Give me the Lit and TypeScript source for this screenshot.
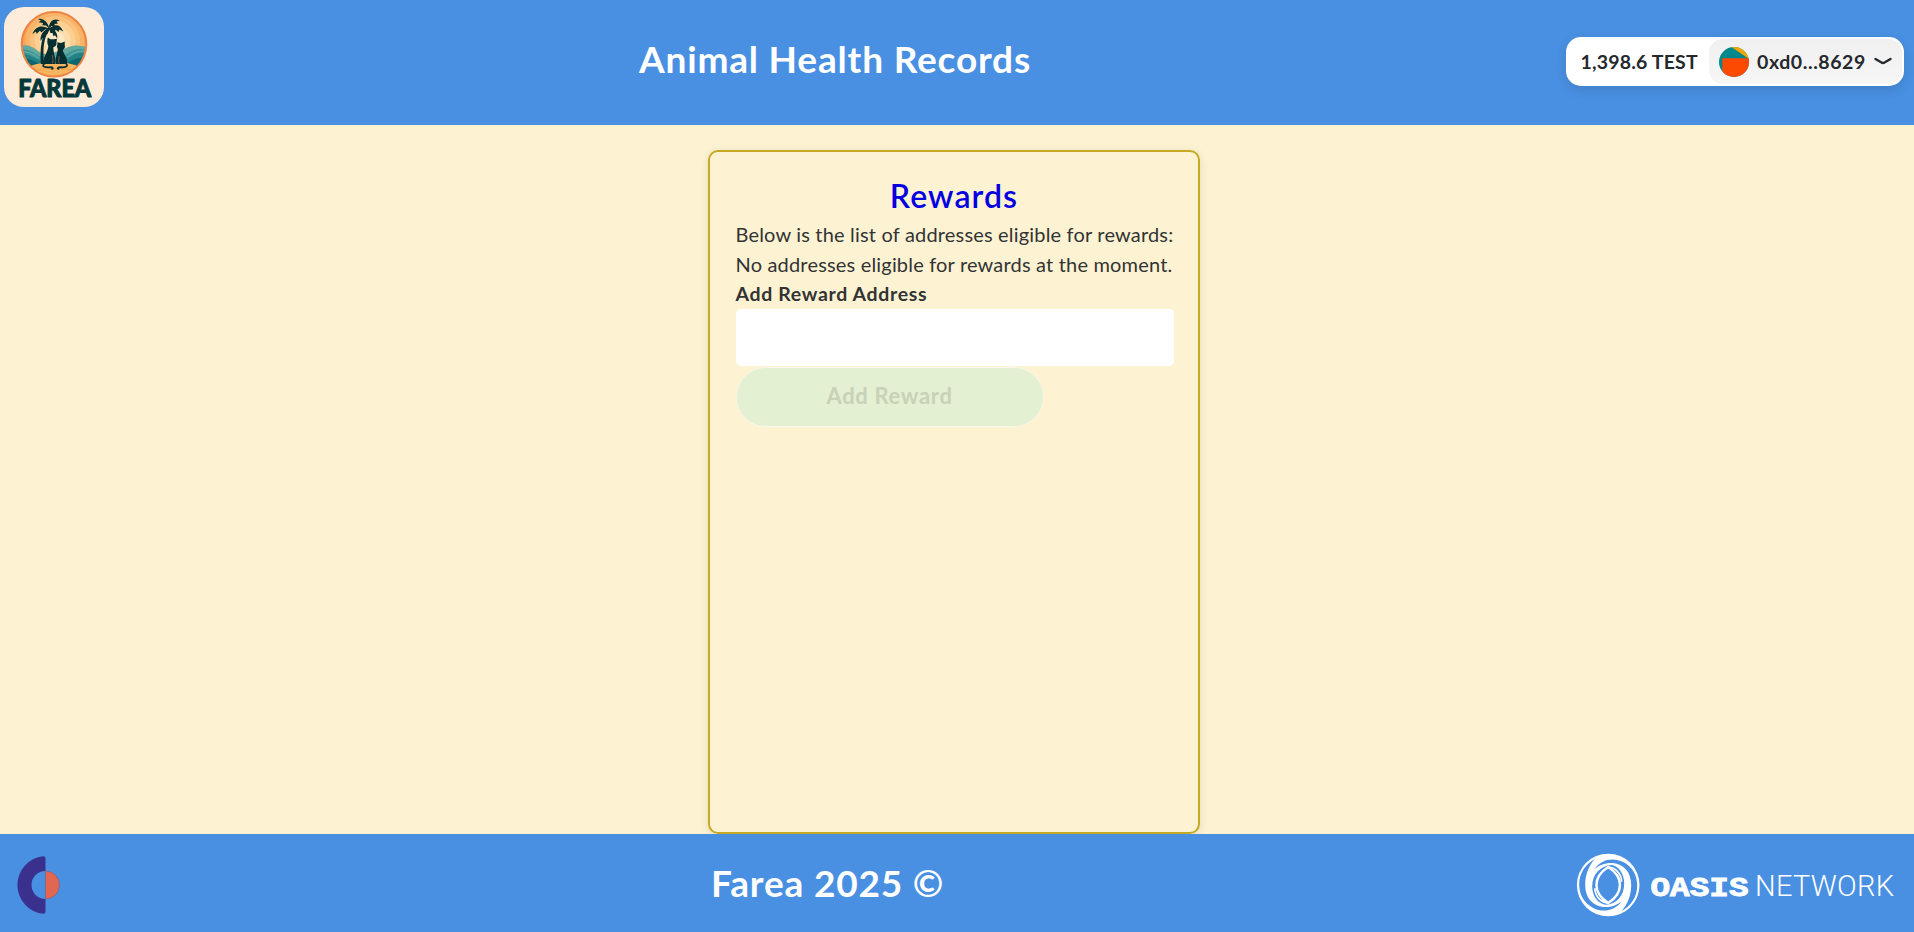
import { LitElement, html, css, svg } from 'lit';
import { customElement } from 'lit/decorators.js';

@customElement('farea-logo')
class FareaLogo extends LitElement {
  static styles = css`
    :host { display: block; width: 100px; height: 100px; }
    svg { display: block; }
    text { font-family: Lato, sans-serif; font-weight: 900; font-size: 24.5px; }
  `;
  render() {
    return html`<svg width="100" height="100" viewBox="0 0 100 100">
      <defs>
        <clipPath id="disc"><circle cx="50" cy="37.3" r="32.3" /></clipPath>
        <clipPath id="tile"><rect width="100" height="100" rx="20" /></clipPath>
      </defs>
      <g clip-path="url(#tile)">
        <rect width="100" height="100" fill="#fcecd9" />
        <g clip-path="url(#disc)">
          <rect x="15" y="3" width="70" height="70" fill="#f6a557" />
          <circle cx="51" cy="34" r="29.5" fill="#f9b469" />
          <circle cx="51" cy="34" r="25" fill="#fbc27c" />
          <circle cx="51" cy="34" r="20.5" fill="#fccf92" />
          <circle cx="51" cy="34" r="15.5" fill="#fddcab" />
          <circle cx="51" cy="34" r="10" fill="#fee7c3" />
          <path d="M15 39C24 37 29 40 34 44C40 48 45 48 51 45C59 44 64 38 73 38.5L85 40V72H15Z" fill="#62a99f" />
          <path d="M15 43C24 41 29 45 35 49C46 52 56 52 64 46C70 42 76 41 85 43V72H15Z" fill="#3d9797" />
          <path d="M15 48C24 45 29 51 38 54C50 55 59 54 66 50C72 46 77 45 85 47V72H15Z" fill="#238186" />
          <path d="M15 53C25 49 31 56 40 58H60C67 54 73 49 85 51V72H15Z" fill="#0c6770" />
          <path d="M15 46C23 43 28 47 35 51M64 50C71 44 77 43 85 45" fill="none" stroke="#87bcb0" stroke-width=".7" />
          <path d="M18 63C34 53 64 52 82 63V73H18Z" fill="#f7b45e" />
          <path d="M27 65C40 60 60 60 73 65" fill="none" stroke="#f09a45" stroke-width=".8" />
        </g>
        <circle cx="50" cy="37.3" r="32.3" fill="none" stroke="#ee8443" stroke-width="2" />
        <g fill="#072f32">
          <path d="M43.8 21C38.5 28 35.8 37 36.8 57H40C38.5 40 40 30 46 22Z" />
          <path d="M45.5 22C39 18 32 18 28.3 27L32 24.5L32.6 27L36 23.6L37.2 25.5L41 22.5Z" />
          <path d="M45.5 22C44 15 39 10.5 34 12L37 13.7L34.5 15.3L39 16L38.3 18.2L42 18.5Z" />
          <path d="M44.5 22C45 15 49 10 56 13.6L52.5 14.6L54 16.5L50.5 17L51 19L47.5 19Z" />
          <path d="M45 22C50 17 56 16.5 59.3 24.5L55.5 22.5L54.5 25L51.8 22.8L50.5 24.4Z" />
          <path d="M45 21C49 21 54 25 53.3 31.5L51 28.2L49.5 29.3L48.5 26L46.4 26Z" />
          <path d="M46 21C41 22 36 26 36.5 34L38.9 30.8L40 31.5L41.5 27.5L43.5 27Z" />
          <path d="M43.8 30.5L46.5 32.3H50L53 31.8L52.4 36C53 38.5 51 39.8 49.5 40C48.8 45 51.8 49 51.6 57H40C38.5 49 44 46 44.3 39C42.9 36.5 43.2 33 43.8 30.5Z" />
          <path d="M53.5 37C53 35.5 53.6 35 54.5 35.5L57 36L60.8 34.5L60.7 38C61.5 41 60 42.3 58.8 43C59.2 47 64.5 51 62.8 57H52C50.9 50 53.7 46 53.8 42C52.6 40.5 52.8 38.5 53.5 37Z" />
        </g>
        <path d="M40.5 56.5C36.5 60 42 60.5 46.5 60.2C49 60.2 49.5 61.5 48 62M62 56.5C65.5 60 60 60.5 56.5 60.2C53.5 60.2 53 61.5 54.5 62" fill="none" stroke="#072f32" stroke-width="1.7" stroke-linecap="round" />
        <path d="M48.7 48C48.2 51 50 53 48.5 56.5M55 49C55.7 52 53.7 53 55.2 56.5" fill="none" stroke="#c88f58" stroke-width=".5" />
        <text x="14.2" y="89.6" textLength="73" lengthAdjust="spacingAndGlyphs" fill="#04383a" stroke="#04383a" stroke-width="1" stroke-linejoin="round">FAREA</text>
      </g>
    </svg>`;
  }
}

@customElement('oasis-logo')
class OasisLogo extends LitElement {
  static styles = css`
    :host { display: flex; align-items: center; color: #fff; }
    svg { display: block; }
    .bold { font: 700 28.5px "Liberation Mono", monospace; }
    .light { font: 300 29px Roboto, sans-serif; }
  `;
  render() {
    const gap = svg`<path d="M-42-47C-20-78 15-84 45-69C74-54 87-28 87 2C87 35 69 62 40 78C60 56 69 28 69 0C69-38 48-62 14-66C-10-67-27-60-42-47Z" />`;
    return html`<svg width="318" height="64" viewBox="0 0 318 64">
      <g transform="translate(32.2 32) scale(.3333)">
        <circle r="94" fill="#fff" />
        <g fill="#4990e2">${gap}<g transform="rotate(180)">${gap}</g>
          <path d="M12-60C-25-58-48-32-48 4C-48 36-30 56-8 59C25 58 48 32 48-4C48-36 30-56 12-60Z" />
        </g>
        <path d="M0-54C-47-24-47 24 0 54C47 24 47-24 0-54Z" fill="none" stroke="#fff" stroke-width="7.5" />
        <path d="M0-54C22-53 40-33 40-10M0 54C-22 53-40 33-40 10" fill="none" stroke="#fff" stroke-width="5" />
      </g>
      <text class="bold" x="74.5" y="42.9" textLength="98" lengthAdjust="spacingAndGlyphs" fill="#fff" stroke="#fff" stroke-width=".9">OASIS</text>
      <text class="light" x="179" y="42.9" textLength="139" lengthAdjust="spacing" fill="#fff">NETWORK</text>
    </svg>`;
  }
}

@customElement('app-root')
class AppRoot extends LitElement {
  static styles = css`
    :host { display: flex; flex-direction: column; height: 932px; overflow: hidden; background: #fdf3d3; color: #333; font-family: Lato, sans-serif; }
    * { box-sizing: border-box; }
    h1, h2, p { margin: 0; }
    header { display: grid; grid-template-columns: 639px 1fr auto; height: 125px; flex: none; background: #4990e2; padding: 7px 10px 0 4px; align-items: start; }
    h1, .copy { font-size: 37px; line-height: 48px; font-weight: 700; letter-spacing: .82px; color: #fff; white-space: nowrap; }
    h1 { padding-top: 28px; margin-left: -4px; }
    .wallet { display: flex; align-items: center; width: 338px; height: 49px; margin-top: 30px; padding: 2px 2px 2px 0; border-radius: 15px; background: #fff; box-shadow: 0 4px 12px rgba(0,0,0,.12); color: #25292e; font-size: 19.5px; line-height: 24px; font-weight: 700; white-space: nowrap; }
    .balance { width: 144px; padding-left: 14.5px; letter-spacing: .18px; }
    .account { flex: 1; display: flex; align-items: center; height: 45px; padding: 0 10px; border-radius: 14px; background: linear-gradient(#f0f0f0, #f6f6f6); }
    .avatar { display: block; margin-right: 8px; }
    .address { width: 117px; letter-spacing: .57px; }
    main { flex: 1; padding: 25px 0 0 708px; min-height: 0; }
    .card { width: 492px; height: 684px; padding: 24px 25.5px; border: 2px solid #c5a922; border-radius: 10px; box-shadow: 0 2px 10px rgba(0,0,0,.1); }
    h2 { font-size: 32px; line-height: 40px; height: 43px; font-weight: 600; letter-spacing: 1.1px; color: #0400e2; text-align: center; }
    p { font-size: 20px; line-height: 30px; letter-spacing: .18px; white-space: nowrap; }
    label { display: block; font-size: 19.5px; line-height: 30px; font-weight: 700; letter-spacing: .65px; }
    input { display: block; width: 438px; height: 57px; border: 0; border-radius: 5px; background: #fff; padding: 0 12px; font: inherit; }
    button { display: block; width: 308px; height: 60px; margin-top: .5px; padding: 0 0 2px; border: 1px solid #f7f6e8; border-radius: 30px; background: #e3f0d1; color: #c8d2b6; font: 700 22px Lato, sans-serif; letter-spacing: .67px; }
    footer { flex: none; display: grid; grid-template-columns: 711px 1fr auto; height: 98px; padding: 0 20px 0 0; background: #4990e2; align-items: start; }
    .mark { display: block; margin: 20px 0 0 15px; }
    .copy { padding-top: 25px; }
    oasis-logo { margin-top: 19px; }
  `;
  render() {
    return html`
      <header>
        <farea-logo></farea-logo>
        <h1>Animal Health Records</h1>
        <div class="wallet">
          <span class="balance">1,398.6 TEST</span>
          <div class="account">
            <svg class="avatar" width="30" height="30" viewBox="0 0 30 30">
              <defs><clipPath id="avatar"><circle cx="15" cy="15" r="15" /></clipPath></defs>
              <g clip-path="url(#avatar)">
                <rect width="30" height="30" fill="#01888c" />
                <path d="M12.5 0H30V12Z" fill="#f3a600" />
                <path d="M3.3 11.3H30V30H3.3Z" fill="#fc4a02" />
              </g>
            </svg>
            <span class="address">0xd0...8629</span>
            <svg width="18" height="9" viewBox="0 0 18 9"><path d="M1.5 2L7.5 5.5Q9 6.4 10.5 5.5L16.5 2" fill="none" stroke="#25292e" stroke-width="2.4" stroke-linecap="round" stroke-linejoin="round" /></svg>
          </div>
        </div>
      </header>
      <main>
        <section class="card">
          <h2>Rewards</h2>
          <p>Below is the list of addresses eligible for rewards:</p>
          <p>No addresses eligible for rewards at the moment.</p>
          <label for="reward">Add Reward Address</label>
          <input id="reward" type="text" />
          <button disabled>Add Reward</button>
        </section>
      </main>
      <footer>
        <svg class="mark" width="50" height="62" viewBox="15 854 50 62">
          <path d="M45.5 858.5V871A14 14 0 0 0 45.5 899V911.5Q45.500 914 43 913.8A29 29 0 0 1 43 856.2Q45.500 856 45.500 858.500Z" fill="#3a318e" />
          <path d="M45.500 871A14 14 0 0 1 45.500 899Z" fill="#e26752" stroke="#7a5a86" stroke-width=".6" />
        </svg>
        <div class="copy">Farea 2025 ©</div>
        <oasis-logo></oasis-logo>
      </footer>`;
  }
}
